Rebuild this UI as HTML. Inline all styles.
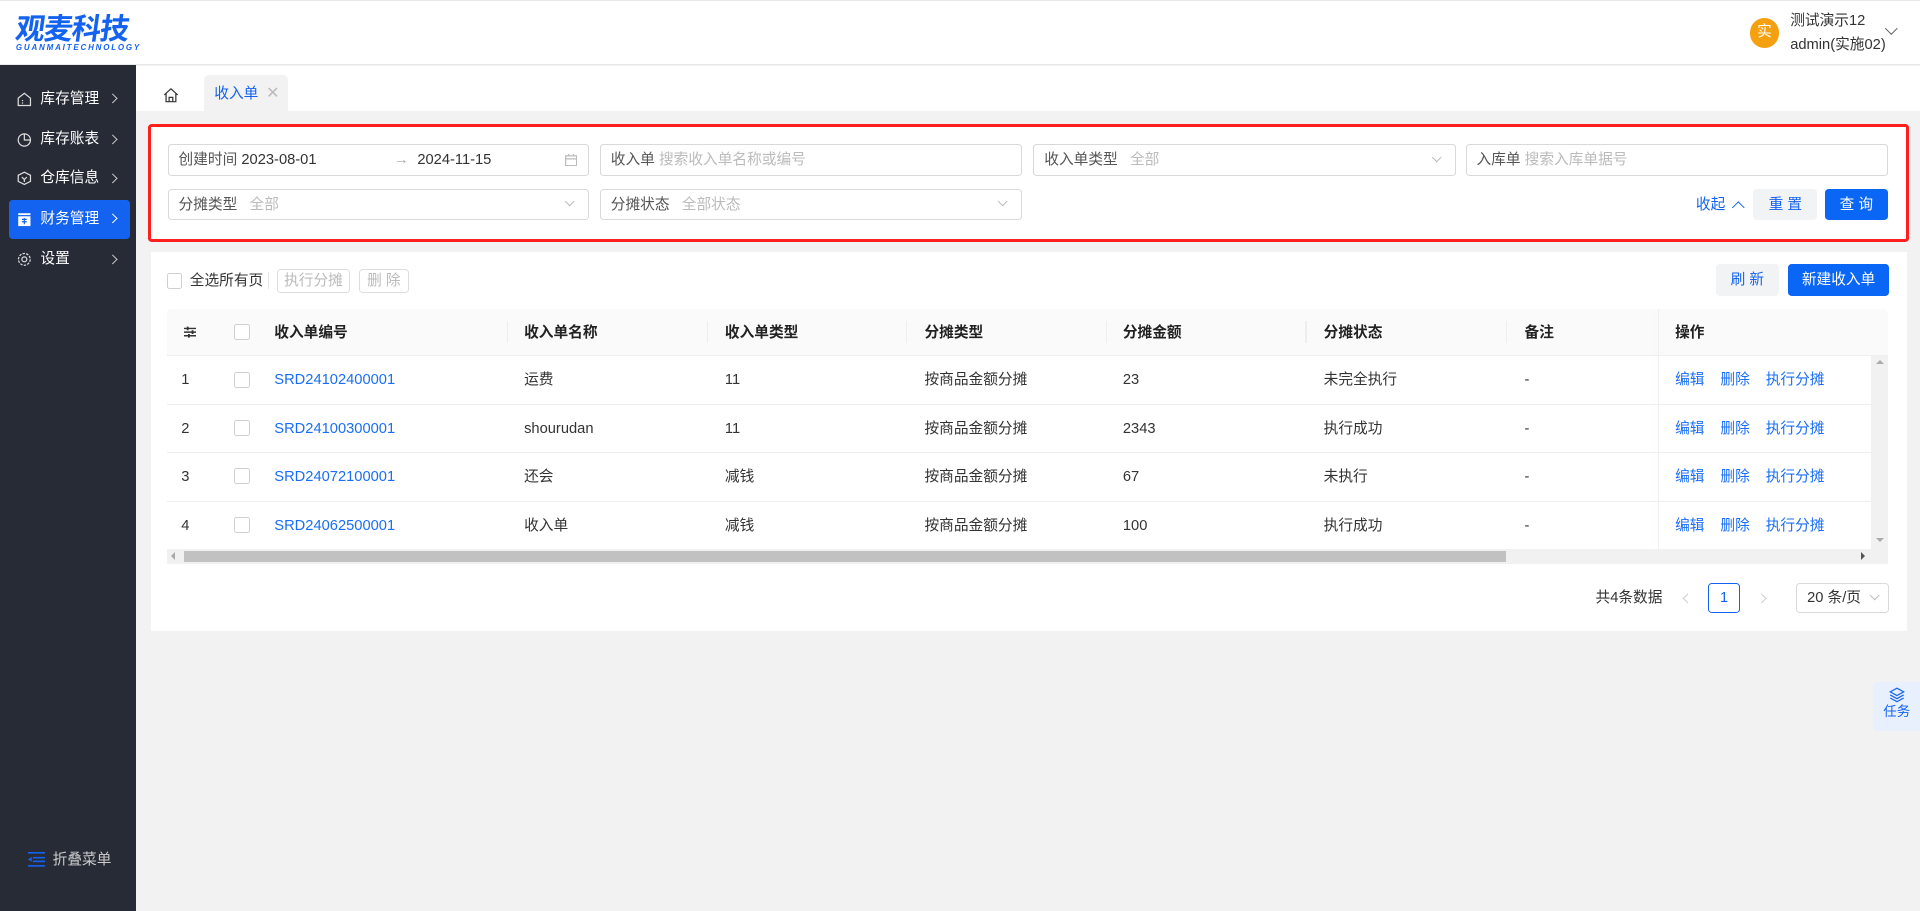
<!DOCTYPE html>
<html><head><meta charset="utf-8">
<style>
*{box-sizing:border-box;margin:0;padding:0}
html{zoom:1.2245}
body{width:1568px;height:744px;overflow:hidden;background:#f2f2f2;font-family:"Liberation Sans","Noto Sans CJK SC",sans-serif;font-size:12px;line-height:16px;color:#333;position:relative}
.abs{position:absolute}
.hdr{left:0;top:0;width:1568px;height:53px;background:#fff;border-bottom:1px solid #e8e8e8;border-top:1px solid #e6e6e6}
.logo{left:13px;top:8px;color:#1463f0;font-size:24px;font-weight:bold;line-height:28px;font-family:"Noto Sans CJK SC",sans-serif;transform:skewX(-8deg);letter-spacing:-1px}
.logo2{left:13px;top:35px;color:#1463f0;font-size:6.5px;font-style:italic;font-weight:bold;letter-spacing:1.5px;line-height:8px}
.side{left:0;top:53px;width:111px;height:691px;background:#272b36}
.mi{position:absolute;left:7px;width:99px;height:32px;color:#fff;font-size:12px;line-height:32px;padding-left:26px;border-radius:3px}
.chev{position:absolute;width:6px;height:6px;border-right:1.2px solid #ccc;border-top:1.2px solid #ccc;transform:rotate(45deg)}
.chd{position:absolute;width:6px;height:6px;border-right:1px solid #bbb;border-bottom:1px solid #bbb;transform:rotate(45deg)}
.mi svg{position:absolute;left:7px;top:10px}
.tabbar{left:111px;top:54px;width:1457px;height:37px;background:#fff}
.card{background:#fff}
.inp{position:absolute;height:26px;border:1px solid #d9d9d9;border-radius:3px;background:#fff;line-height:26px;padding-left:8px;color:#555;white-space:nowrap}
.inp .ph{color:#bbb}
.inp .chd{right:12px;top:7px}
.btn{position:absolute;height:26px;border-radius:3px;line-height:27px;text-align:center;font-size:12px}
.th,.td{position:absolute;white-space:nowrap;line-height:16px}
.cb{position:absolute;width:13px;height:13px;border:1px solid #d0d0d0;border-radius:2px;background:#fff}
a{color:#1a6ef5;text-decoration:none}
</style></head><body>
<div class="abs hdr"></div>
<div class="abs logo">观麦科技</div>
<div class="abs logo2">GUANMAITECHNOLOGY</div>
<div class="abs" style="left:1429px;top:15px;width:24px;height:24px;border-radius:50%;background:#f5a00f;color:#fff;text-align:center;line-height:24px;font-size:12px">实</div>
<div class="abs" style="left:1462px;top:10px;color:#333;font-size:12px">测试演示12</div>
<div class="abs" style="left:1462px;top:29px;color:#333;font-size:12px">admin(实施02)</div>
<div class="abs" style="left:1541px;top:20px;width:7px;height:7px;border-right:1px solid #666;border-bottom:1px solid #666;transform:rotate(45deg)"></div>

<div class="abs side">
 <div class="mi" style="top:12px"><svg width="12" height="12" viewBox="0 0 12 12" fill="none" stroke="#ddd"><path d="M1 5L6 1l5 4v6H1z"/><path d="M4 9h1M4 7h1"/></svg>库存管理<span class="chev" style="right:11px;top:13px"></span></div>
 <div class="mi" style="top:45px"><svg width="12" height="12" viewBox="0 0 12 12" fill="none" stroke="#ddd"><circle cx="6" cy="6.5" r="5"/><path d="M6 1.5v5h5"/></svg>库存账表<span class="chev" style="right:11px;top:13px"></span></div>
 <div class="mi" style="top:77px"><svg width="12" height="12" viewBox="0 0 12 12" fill="none" stroke="#ddd"><path d="M6 1l5 2.5v5L6 11 1 8.5v-5z"/><path d="M4 5l2 2 2-2M6 7v2"/></svg>仓库信息<span class="chev" style="right:11px;top:13px"></span></div>
 <div class="mi" style="top:110px;background:#1463f0"><svg width="12" height="12" viewBox="0 0 12 12"><rect x="1" y="1" width="10" height="1.5" fill="#fff"/><rect x="1" y="3.5" width="10" height="8" fill="#fff"/><path d="M4 6h4M6 5v5M4 8h4" stroke="#1463f0"/></svg>财务管理<span class="chev" style="right:11px;top:13px;border-color:#fff"></span></div>
 <div class="mi" style="top:143px"><svg width="12" height="12" viewBox="0 0 12 12" fill="none" stroke="#ddd"><circle cx="6" cy="6" r="2"/><circle cx="6" cy="6" r="4.8" stroke-dasharray="2 1"/></svg>设置<span class="chev" style="right:11px;top:13px"></span></div>
 <div class="abs" style="left:23px;top:643px"><svg width="14" height="12" viewBox="0 0 14 12" fill="#1463f0"><rect x="0" y="0" width="14" height="1.3"/><rect x="4" y="4" width="10" height="1.3"/><rect x="4" y="7" width="10" height="1.3"/><rect x="0" y="10.7" width="14" height="1.3"/><path d="M0 6l3-2v4z"/></svg></div>
 <div class="abs" style="left:43px;top:642px;color:#ccc;font-size:12px">折叠菜单</div>
</div>

<div class="abs tabbar"></div>
<div class="abs" style="left:133px;top:71px"><svg width="13" height="13" viewBox="0 0 13 13" fill="none" stroke="#333"><path d="M1 6.5L6.5 1.5 12 6.5M2.5 5v7h8V5M5 12V8.5h3V12"/></svg></div>
<div class="abs" style="left:167px;top:61px;width:68px;height:30px;background:#f2f2f2;border-radius:4px 4px 0 0;color:#1463f0;line-height:31px;padding-left:8px">收入单 <span style="color:#bbb;font-size:13px;margin-left:3px">✕</span></div>

<div class="abs card" style="left:121px;top:101px;width:1438px;height:97px;border:3px solid #ff1f1f;border-radius:3px"></div>
<div class="inp" style="left:137px;top:118px;width:344px">创建时间 <span style="color:#333">2023-08-01</span><span style="position:absolute;left:184px;color:#aaa">→</span><span style="position:absolute;left:203px;color:#333">2024-11-15</span>
 <svg style="position:absolute;right:9px;top:7px" width="10" height="10" viewBox="0 0 10 10" fill="none" stroke="#bbb"><rect x="0.5" y="1.5" width="9" height="8"/><path d="M0.5 4h9M3 0v2M7 0v2"/></svg></div>
<div class="inp" style="left:490px;top:118px;width:345px">收入单 <span class="ph">搜索收入单名称或编号</span></div>
<div class="inp" style="left:844px;top:118px;width:345px">收入单类型 &nbsp;&nbsp;<span class="ph">全部</span><span class="chd"></span></div>
<div class="inp" style="left:1197px;top:118px;width:345px">入库单 <span class="ph">搜索入库单据号</span></div>
<div class="inp" style="left:137px;top:154px;width:344px">分摊类型 &nbsp;&nbsp;<span class="ph">全部</span><span class="chd"></span></div>
<div class="inp" style="left:490px;top:154px;width:345px">分摊状态 &nbsp;&nbsp;<span class="ph">全部状态</span><span class="chd"></span></div>
<div class="abs" style="left:1385px;top:160px;color:#1463f0">收起</div>
<div class="abs" style="left:1416px;top:166px;width:7px;height:7px;border-left:1.3px solid #1463f0;border-top:1.3px solid #1463f0;transform:rotate(45deg)"></div>
<div class="btn" style="left:1432px;top:154px;width:52px;background:#f2f3f5;color:#1463f0">重 置</div>
<div class="btn" style="left:1490px;top:154px;width:52px;background:#0a66f5;color:#fff">查 询</div>

<div class="abs card" style="left:123px;top:206px;width:1434px;height:309px"></div>
<div class="cb" style="left:136px;top:223px"></div>
<div class="abs" style="left:155px;top:222px;color:#333">全选所有页</div>
<div class="abs" style="left:219px;top:222px;width:1px;height:14px;background:#e5e5e5"></div>
<div class="btn" style="left:226px;top:220px;width:60px;height:19px;line-height:18px;border:1px solid #ddd;color:#bbb">执行分摊</div>
<div class="btn" style="left:293px;top:220px;width:41px;height:19px;line-height:18px;border:1px solid #ddd;color:#bbb">删 除</div>
<div class="btn" style="left:1401px;top:216px;width:52px;background:#f2f3f5;color:#1463f0">刷 新</div>
<div class="btn" style="left:1460px;top:216px;width:83px;background:#0a66f5;color:#fff">新建收入单</div>

<div class="abs" style="left:136px;top:252px;width:1406px;height:39px;background:#fafafa;border-bottom:1px solid #eee;border-radius:4px 4px 0 0"></div>
<div class="abs" style="left:1354px;top:252px;width:1px;height:196px;background:#f0f0f0;box-shadow:-3px 0 5px rgba(0,0,0,.04)"></div>
<div class="abs" style="left:150px;top:266px"><svg width="10" height="10" viewBox="0 0 10 10" stroke="#333" stroke-width="1.2"><path d="M0 2h10M0 5h10M0 8h10"/><path d="M3 0.5v3M7 3.5v3M4 6.5v3" stroke-width="1.5"/></svg></div>
<div class="cb" style="left:191px;top:265px"></div>
<div style="font-weight:bold;color:#222">
<div class="th" style="left:224px;top:265px">收入单编号</div>
<div class="th" style="left:428px;top:265px">收入单名称</div>
<div class="th" style="left:592px;top:265px">收入单类型</div>
<div class="th" style="left:755px;top:265px">分摊类型</div>
<div class="th" style="left:917px;top:265px">分摊金额</div>
<div class="th" style="left:1081px;top:265px">分摊状态</div>
<div class="th" style="left:1245px;top:265px">备注</div>
<div class="th" style="left:1368px;top:265px">操作</div>
</div>
<div class="abs" style="left:414px;top:262px;width:1px;height:18px;background:#eee"></div>
<div class="abs" style="left:577px;top:262px;width:1px;height:18px;background:#eee"></div>
<div class="abs" style="left:740px;top:262px;width:1px;height:18px;background:#eee"></div>
<div class="abs" style="left:903px;top:262px;width:1px;height:18px;background:#eee"></div>
<div class="abs" style="left:1066px;top:262px;width:1px;height:18px;background:#eee"></div>
<div class="abs" style="left:1230px;top:262px;width:1px;height:18px;background:#eee"></div>

<div style="color:#333">
<div class="td" style="left:148px;top:303px">1</div><div class="cb" style="left:191px;top:304px"></div>
<div class="td" style="left:224px;top:303px"><a>SRD24102400001</a></div><div class="td" style="left:428px;top:303px">运费</div><div class="td" style="left:592px;top:303px">11</div><div class="td" style="left:755px;top:303px">按商品金额分摊</div><div class="td" style="left:917px;top:303px">23</div><div class="td" style="left:1081px;top:303px">未完全执行</div><div class="td" style="left:1245px;top:303px">-</div>
<div class="td" style="left:1368px;top:303px"><a>编辑</a><a style="margin-left:13px">删除</a><a style="margin-left:13px">执行分摊</a></div>
<div class="abs" style="left:136px;top:330px;width:1392px;height:1px;background:#eee"></div>

<div class="td" style="left:148px;top:343px">2</div><div class="cb" style="left:191px;top:343px"></div>
<div class="td" style="left:224px;top:343px"><a>SRD24100300001</a></div><div class="td" style="left:428px;top:343px">shourudan</div><div class="td" style="left:592px;top:343px">11</div><div class="td" style="left:755px;top:343px">按商品金额分摊</div><div class="td" style="left:917px;top:343px">2343</div><div class="td" style="left:1081px;top:343px">执行成功</div><div class="td" style="left:1245px;top:343px">-</div>
<div class="td" style="left:1368px;top:343px"><a>编辑</a><a style="margin-left:13px">删除</a><a style="margin-left:13px">执行分摊</a></div>
<div class="abs" style="left:136px;top:369px;width:1392px;height:1px;background:#eee"></div>

<div class="td" style="left:148px;top:382px">3</div><div class="cb" style="left:191px;top:382px"></div>
<div class="td" style="left:224px;top:382px"><a>SRD24072100001</a></div><div class="td" style="left:428px;top:382px">还会</div><div class="td" style="left:592px;top:382px">减钱</div><div class="td" style="left:755px;top:382px">按商品金额分摊</div><div class="td" style="left:917px;top:382px">67</div><div class="td" style="left:1081px;top:382px">未执行</div><div class="td" style="left:1245px;top:382px">-</div>
<div class="td" style="left:1368px;top:382px"><a>编辑</a><a style="margin-left:13px">删除</a><a style="margin-left:13px">执行分摊</a></div>
<div class="abs" style="left:136px;top:409px;width:1392px;height:1px;background:#eee"></div>

<div class="td" style="left:148px;top:422px">4</div><div class="cb" style="left:191px;top:422px"></div>
<div class="td" style="left:224px;top:422px"><a>SRD24062500001</a></div><div class="td" style="left:428px;top:422px">收入单</div><div class="td" style="left:592px;top:422px">减钱</div><div class="td" style="left:755px;top:422px">按商品金额分摊</div><div class="td" style="left:917px;top:422px">100</div><div class="td" style="left:1081px;top:422px">执行成功</div><div class="td" style="left:1245px;top:422px">-</div>
<div class="td" style="left:1368px;top:422px"><a>编辑</a><a style="margin-left:13px">删除</a><a style="margin-left:13px">执行分摊</a></div>
</div>

<div class="abs" style="left:1528px;top:291px;width:14px;height:157px;background:#f1f1f1"></div>
<div class="abs" style="left:1531px;top:294px;width:0;height:0;border:4px solid transparent;border-bottom-color:#aaa;border-top:0;margin-left:1px"></div>
<div class="abs" style="left:1532px;top:439px;width:0;height:0;border:4px solid transparent;border-top-color:#aaa;border-bottom:0"></div>
<div class="abs" style="left:136px;top:448px;width:1406px;height:13px;background:#f1f1f1"></div>
<div class="abs" style="left:150px;top:450px;width:1080px;height:9px;background:#c1c1c1"></div>
<div class="abs" style="left:140px;top:451px;width:0;height:0;border:3.5px solid transparent;border-right-color:#aaa;border-left:0"></div>
<div class="abs" style="left:1520px;top:451px;width:0;height:0;border:3.5px solid transparent;border-left-color:#555;border-right:0"></div>

<div class="abs" style="left:1303px;top:481px;color:#333">共4条数据</div>
<div class="abs" style="left:1375px;top:486px;width:6px;height:6px;border-left:1px solid #ccc;border-bottom:1px solid #ccc;transform:rotate(45deg)"></div>
<div class="abs" style="left:1395px;top:476px;width:26px;height:25px;border:1px solid #1463f0;border-radius:3px;color:#1463f0;text-align:center;line-height:23px">1</div>
<div class="abs" style="left:1436px;top:486px;width:6px;height:6px;border-right:1px solid #ccc;border-top:1px solid #ccc;transform:rotate(45deg)"></div>
<div class="abs" style="left:1467px;top:476px;width:76px;height:25px;border:1px solid #d9d9d9;border-radius:3px;color:#333;line-height:24px;padding-left:8px">20 条/页<span class="chd" style="right:8px;top:7px"></span></div>

<div class="abs" style="left:1530px;top:557px;width:38px;height:40px;background:#e8f0fe;border-radius:3px 0 0 3px;text-align:center;color:#1463f0;font-size:11px">
<svg width="13" height="13" viewBox="0 0 13 13" fill="none" stroke="#1463f0" style="margin-top:4px;display:block;margin-left:13px"><path d="M6.5 1L12 4 6.5 7 1 4z"/><path d="M1 6.5l5.5 3 5.5-3M1 9l5.5 3 5.5-3"/></svg>
<div style="line-height:14px">任务</div></div>
</body></html>
